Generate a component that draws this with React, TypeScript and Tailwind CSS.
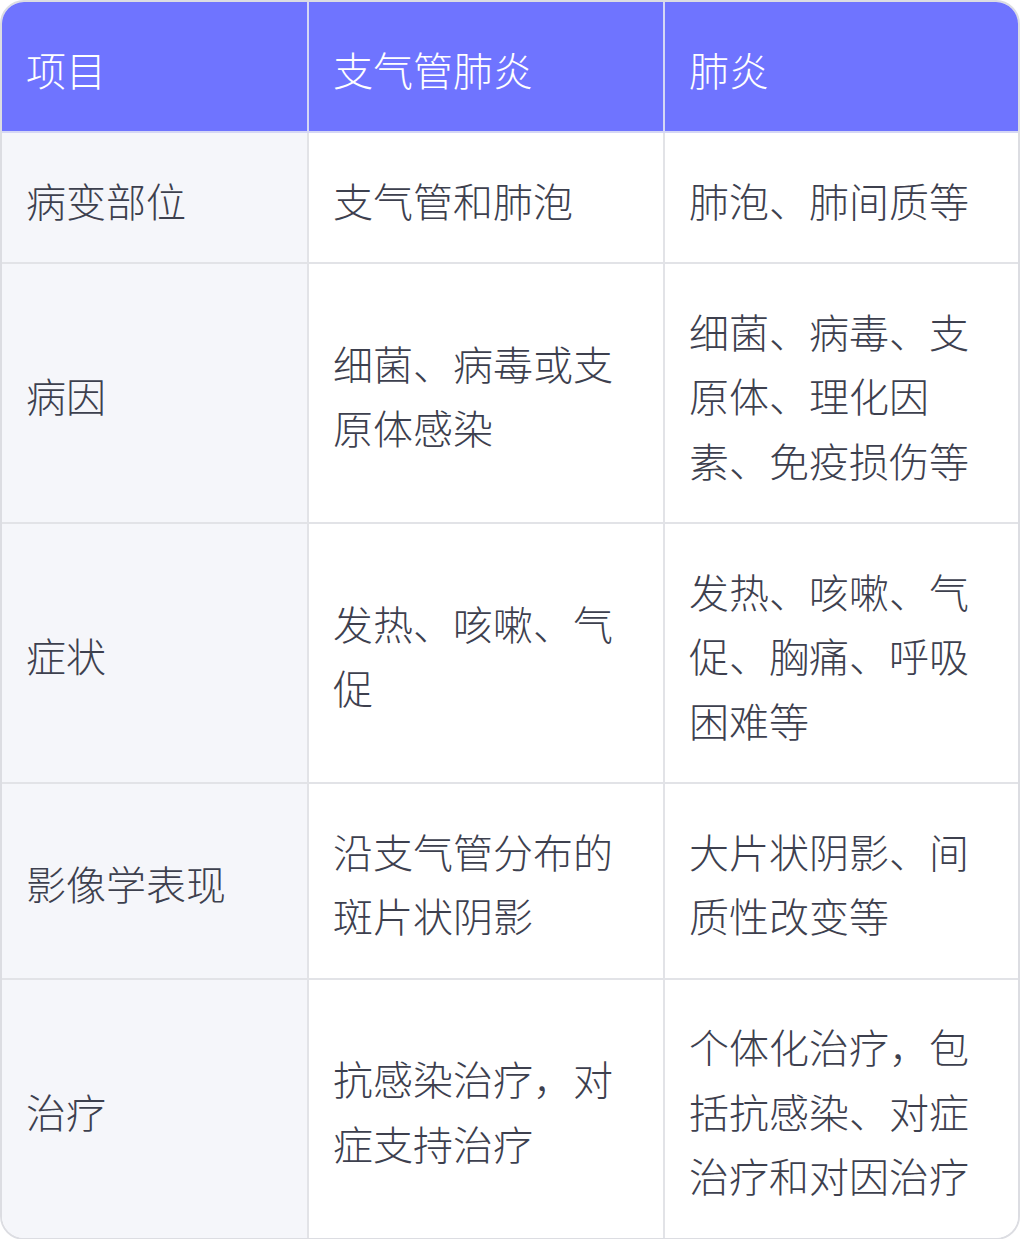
import React from "react";

const rows: [string, string, string][] = [
  ["病变部位", "支气管和肺泡", "肺泡、肺间质等"],
  ["病因", "细菌、病毒或支原体感染", "细菌、病毒、支原体、理化因素、免疫损伤等"],
  ["症状", "发热、咳嗽、气促", "发热、咳嗽、气促、胸痛、呼吸困难等"],
  ["影像学表现", "沿支气管分布的斑片状阴影", "大片状阴影、间质性改变等"],
  ["治疗", "抗感染治疗，对症支持治疗", "个体化治疗，包括抗感染、对症治疗和对因治疗"],
];

export default function App() {
  return (
    <div
      className="w-[1020px] bg-white"
      style={{ fontFamily: '"Noto Sans CJK SC", "Noto Sans", sans-serif' }}
    >
      <div className="border-2 border-[#dcdde2] rounded-[24px] overflow-hidden">
        <div className="grid grid-cols-[307px_356px_1fr] text-[40px] leading-[64.5px] font-light">
          <div className="bg-[#6f74ff] text-white px-[24px] pt-[35px] pb-[29.5px] border-r-2 border-b-2 border-[#d5d7f5]">项目</div>
          <div className="bg-[#6f74ff] text-white px-[24px] pt-[35px] pb-[29.5px] border-r-2 border-b-2 border-[#d5d7f5]">支气管肺炎</div>
          <div className="bg-[#6f74ff] text-white px-[24px] pt-[35px] pb-[29.5px] border-b-2 border-[#d5d7f5]">肺炎</div>
          {rows.map((r, i) => {
            const last = i === rows.length - 1;
            return (
              <React.Fragment key={i}>
                <div
                  className={
                    "bg-[#f5f6fa] text-[#3d404e] px-[24px] pt-[34.5px] pb-[30px] border-r-2 border-[#e2e3e7] flex items-center " +
                    (last ? "" : "border-b-2")
                  }
                >
                  {r[0]}
                </div>
                <div
                  className={
                    "bg-white text-[#3d404e] px-[24px] pt-[34.5px] pb-[30px] border-r-2 border-[#e2e3e7] flex items-center " +
                    (last ? "" : "border-b-2")
                  }
                >
                  <span>{r[1]}</span>
                </div>
                <div
                  className={
                    "bg-white text-[#3d404e] px-[24px] pt-[34.5px] pb-[30px] border-[#e2e3e7] flex items-center " +
                    (last ? "" : "border-b-2")
                  }
                >
                  <span>{r[2]}</span>
                </div>
              </React.Fragment>
            );
          })}
        </div>
      </div>
    </div>
  );
}
